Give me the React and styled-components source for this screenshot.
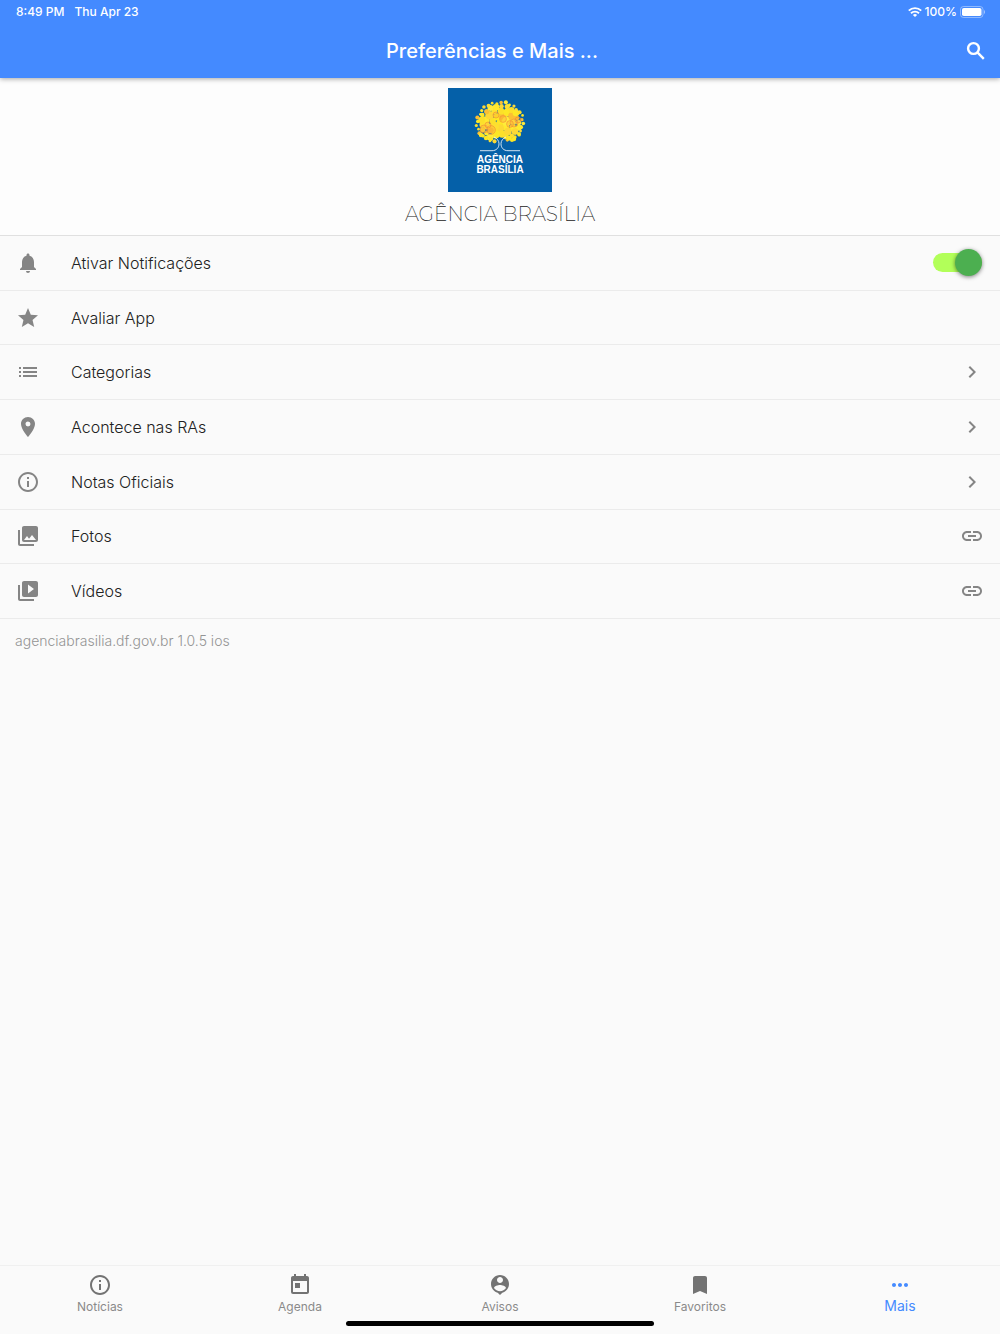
import React, { useState } from 'react';
import styled, { createGlobalStyle } from 'styled-components';
import {
  MdBookmark, MdChevronRight, MdInfoOutline, MdLink, MdList, MdLocationOn, MdMoreHoriz,
  MdNotifications, MdPhotoLibrary, MdStar, MdToday, MdVideoLibrary,
} from 'react-icons/md';

const GlobalStyle = createGlobalStyle`
  *, *::before, *::after { box-sizing: border-box; }
  body {
    margin: 0;
    background: #fafafa;
    color: #212121;
    font-family: Inter, Roboto, "Liberation Sans", sans-serif;
  }
  button, input { font: inherit; }
  a { color: inherit; text-decoration: none; }
`;

const Page = styled.div`
  display: flex;
  flex-direction: column;
  min-height: 100vh;
`;

const Header = styled.header`
  position: relative;
  z-index: 1;
  background: #448aff;
  color: #fff;
  box-shadow: 0 1px 5px rgba(0, 0, 0, 0.35);
`;

const StatusBar = styled.div`
  display: flex;
  justify-content: space-between;
  height: 24px;
  padding: 0 14px 0 16px;
  font-size: 12px;
  font-weight: 500;
  line-height: 24px;
`;

const StatusGroup = styled.div`
  display: flex;
  align-items: center;
  gap: ${(p) => p.$gap}px;
`;

const Toolbar = styled.div`
  display: grid;
  grid-template-columns: 32px 1fr 48px;
  align-items: center;
  height: 54px;
`;

const Title = styled.h1`
  grid-column: 2;
  margin: 0;
  font-size: 20px;
  font-weight: 500;
  line-height: 24px;
  text-align: center;
`;

const IconButton = styled.button`
  display: grid;
  place-items: center;
  height: 48px;
  padding: 0;
  border: 0;
  background: none;
  color: inherit;
  cursor: pointer;
`;

const Main = styled.main`
  flex: 1;
`;

const Brand = styled.section`
  display: flex;
  flex-direction: column;
  align-items: center;
  gap: 8px;
  padding: 10px 16px 7px;
  border-bottom: 1px solid #e0e0e0;
  background: #fdfdfd;
`;

const BrandName = styled.h2`
  margin: 0;
  font-family: Montserrat, Inter, sans-serif;
  font-size: 20px;
  font-weight: 200;
  line-height: 28px;
`;

const Options = styled.ul`
  display: grid;
  grid-auto-rows: 1fr;
  min-height: 383px;
  margin: 0;
  padding: 0;
  list-style: none;
`;

const Option = styled.li`
  display: grid;
  border-bottom: 1px solid #ebebeb;
`;

const Row = styled.a`
  display: flex;
  align-items: center;
  padding: 0 16px;
  cursor: pointer;
`;

const RowIcon = styled.span`
  display: flex;
  width: 55px;
  color: #858585;
`;

const RowLabel = styled.span`
  flex: 1;
  font-size: 16px;
  font-weight: 300;
  line-height: 24px;
`;

const RowEnd = styled.span`
  display: flex;
  color: #858585;
`;

const Switch = styled.input`
  appearance: none;
  display: flex;
  align-items: center;
  justify-content: ${(p) => (p.checked ? 'flex-end' : 'flex-start')};
  width: 49px;
  height: 19px;
  margin: 0 2px 0 0;
  border-radius: 10px;
  background: ${(p) => (p.checked ? '#b2ff59' : '#bdbdbd')};
  cursor: pointer;

  &::before {
    content: '';
    flex: none;
    width: 27px;
    height: 27px;
    border-radius: 50%;
    background: ${(p) => (p.checked ? '#4caf50' : '#fafafa')};
    box-shadow: 0 1px 4px rgba(0, 0, 0, 0.5);
  }
`;

const Version = styled.p`
  margin: 0;
  padding: 12px 15px;
  color: #949494;
  font-size: 14px;
  font-weight: 300;
  line-height: 20px;
`;

const BottomBar = styled.footer`
  display: flex;
  flex-direction: column;
  align-items: center;
  gap: 4px;
  padding-bottom: 8px;
  border-top: 1px solid #f0f0f0;
`;

const Tabs = styled.nav`
  display: grid;
  grid-template-columns: repeat(5, 1fr);
  width: 100%;
`;

const Tab = styled.a`
  display: flex;
  flex-direction: column;
  align-items: center;
  padding-top: 7px;
  color: ${(p) => (p.$active ? '#448aff' : '#737373')};
`;

const TabLabel = styled.span`
  color: ${(p) => (p.$active ? '#448aff' : '#8a8a8a')};
  font-size: ${(p) => (p.$active ? 14 : 12)}px;
  line-height: ${(p) => (p.$active ? 18 : 20)}px;
`;

const HomeIndicator = styled.div`
  width: 31%;
  max-width: 308px;
  height: 5px;
  border-radius: 3px;
  background: #000;
`;

function Search() {
  return (
    <svg width="24" height="24" viewBox="0 0 24 24" fill="none" stroke="currentColor" strokeWidth="2.400" aria-hidden="true">
      <circle cx="9.500" cy="9.500" r="5.400" />
      <path d="M13.700 13.700 19.800 19.800" />
    </svg>
  );
}

function PersonPin() {
  return (
    <svg width="24" height="24" viewBox="0 0 24 24" fill="currentColor" aria-hidden="true">
      <path d="M12 2c-4.97 0-9 4.03-9 9 0 4.17 2.84 7.67 6.69 8.69L12 22l2.31-2.31C18.16 18.67 21 15.17 21 11c0-4.97-4.03-9-9-9zm0 2c1.66 0 3 1.34 3 3s-1.34 3-3 3-3-1.34-3-3 1.34-3 3-3zm0 14.3c-2.5 0-4.71-1.28-6-3.22.03-1.99 4-3.08 6-3.08 1.99 0 5.97 1.09 6 3.08-1.29 1.94-3.5 3.22-6 3.22z" />
    </svg>
  );
}

function Wifi() {
  return (
    <svg width="14" height="10" viewBox="0 0 14 10" fill="none" stroke="#fff" strokeWidth="1.9" aria-hidden="true">
      <path d="M0.8 3.7a8.8 8.8 0 0 1 12.4 0M3 6.300a5.700 5.700 0 0 1 8 0" />
      <path d="M7 10 4.900 8a3 3 0 0 1 4.200 0z" fill="#fff" stroke="none" />
    </svg>
  );
}

function Battery() {
  return (
    <svg width="26" height="12" viewBox="0 0 26 12" aria-hidden="true">
      <rect x="0.5" y="0.5" width="22.5" height="11" rx="3" fill="none" stroke="#fff" strokeOpacity="0.4" />
      <rect x="2" y="2" width="19.5" height="8" rx="1.8" fill="#fff" />
      <path d="M24 4v4c1.4-.6 1.4-3.4 0-4z" fill="#fff" fillOpacity="0.5" />
    </svg>
  );
}

// The crown is built from rings of dots: large ones inside, small ones on the rim.
const rings = [
  { count: 1, reach: 0, size: 4.4 },
  { count: 7, reach: 0.3, size: 4 },
  { count: 13, reach: 0.57, size: 3.6 },
  { count: 21, reach: 0.78, size: 2.8 },
  { count: 32, reach: 0.95, size: 1.7 },
];
const leafColours = ['#fde725', '#fddf30', '#ffe92e', '#fbbf33', '#fce02a', '#fdd835', '#ffeb3b'];
const leaves = rings.flatMap((ring, r) =>
  Array.from({ length: ring.count }, (_, i) => {
    const angle = (i / ring.count) * Math.PI * 2 + r * 0.7;
    const wobble = 1 + (((i * 7 + r * 3) % 5) - 2) * 0.025;
    return {
      x: 52 + Math.cos(angle) * 24 * ring.reach * wobble,
      y: 34.5 + Math.sin(angle) * 21 * ring.reach * wobble,
      size: ring.size * (0.8 + ((i * 5 + r) % 4) * 0.13),
      colour: leafColours[(i * 3 + r * 2) % leafColours.length],
    };
  })
).filter((leaf) => !(leaf.y > 47 && Math.abs(leaf.x - 52) < 5));

function Logo() {
  return (
    <svg width="104" height="104" viewBox="0 0 104 104" role="img" aria-label="Agência Brasília">
      <rect width="104" height="104" fill="#0560a8" />
      {leaves.map((leaf, i) => (
        <circle key={i} cx={leaf.x} cy={leaf.y} r={leaf.size} fill={leaf.colour} />
      ))}
      <g fill="#f8a53a" fillOpacity="0.35" stroke="#f28c38" strokeWidth="0.8" strokeOpacity="0.75">
        <circle cx="36" cy="41" r="4" />
        <circle cx="43" cy="42" r="4.4" />
        <circle cx="40" cy="37" r="3" />
        <circle cx="66" cy="35" r="4" />
        <circle cx="70" cy="32" r="3" />
        <circle cx="62" cy="36" r="3.4" />
        <circle cx="48" cy="27" r="3" />
        <circle cx="55" cy="31" r="3.4" />
      </g>
      <g fill="#fde725">
        <circle cx="33" cy="47" r="2.200" />
        <circle cx="38" cy="50" r="2.200" />
        <circle cx="43" cy="51" r="2" />
        <circle cx="61" cy="50" r="2.600" />
        <circle cx="66" cy="51" r="2.200" />
        <circle cx="71" cy="46" r="2" />
      </g>
      <path
        d="M32 62.7h12c4.500 0 7-3 7-7 0-3-2-5.500-5-6.700M72 62.700H60c-4.500 0-7-3-7-7 0-3 2-5.500 5-6.700"
        fill="none"
        stroke="#e6f0fa"
        strokeWidth="0.9"
      />
      <g fill="#fff" fontFamily="Liberation Sans, Arial, sans-serif" fontSize="10" fontWeight="700" textAnchor="middle">
        <text x="52" y="75">AGÊNCIA</text>
        <text x="52" y="85">BRASÍLIA</text>
      </g>
    </svg>
  );
}

const options = [
  { label: 'Avaliar App', icon: MdStar },
  { label: 'Categorias', icon: MdList, end: MdChevronRight },
  { label: 'Acontece nas RAs', icon: MdLocationOn, end: MdChevronRight },
  { label: 'Notas Oficiais', icon: MdInfoOutline, end: MdChevronRight },
  { label: 'Fotos', icon: MdPhotoLibrary, end: MdLink },
  { label: 'Vídeos', icon: MdVideoLibrary, end: MdLink },
];

const tabs = [
  { label: 'Notícias', icon: MdInfoOutline },
  { label: 'Agenda', icon: MdToday },
  { label: 'Avisos', icon: PersonPin },
  { label: 'Favoritos', icon: MdBookmark },
  { label: 'Mais', icon: MdMoreHoriz, active: true },
];

export default function App() {
  const [notify, setNotify] = useState(true);

  return (
    <Page>
      <GlobalStyle />
      <Header>
        <StatusBar>
          <StatusGroup $gap={10}>
            <span>8:49 PM</span>
            <span>Thu Apr 23</span>
          </StatusGroup>
          <StatusGroup $gap={3}>
            <Wifi />
            <span>100%</span>
            <Battery />
          </StatusGroup>
        </StatusBar>
        <Toolbar>
          <Title>Preferências e Mais ...</Title>
          <IconButton type="button" aria-label="Buscar">
            <Search />
          </IconButton>
        </Toolbar>
      </Header>

      <Main>
        <Brand>
          <Logo />
          <BrandName>AGÊNCIA BRASÍLIA</BrandName>
        </Brand>
        <Options>
          <Option>
            <Row as="label" htmlFor="notify">
              <RowIcon><MdNotifications size={24} /></RowIcon>
              <RowLabel>Ativar Notificações</RowLabel>
              <Switch
                id="notify"
                type="checkbox"
                checked={notify}
                onChange={(e) => setNotify(e.target.checked)}
              />
            </Row>
          </Option>
          {options.map(({ label, icon: Icon, end: End }) => (
            <Option key={label}>
              <Row href="#">
                <RowIcon><Icon size={24} /></RowIcon>
                <RowLabel>{label}</RowLabel>
                {End && <RowEnd><End size={24} /></RowEnd>}
              </Row>
            </Option>
          ))}
        </Options>
        <Version>agenciabrasilia.df.gov.br 1.0.5 ios</Version>
      </Main>

      <BottomBar>
        <Tabs>
          {tabs.map(({ label, icon: Icon, active }) => (
            <Tab key={label} href="#" $active={active} aria-current={active ? 'page' : undefined}>
              <Icon size={24} />
              <TabLabel $active={active}>{label}</TabLabel>
            </Tab>
          ))}
        </Tabs>
        <HomeIndicator />
      </BottomBar>
    </Page>
  );
}
